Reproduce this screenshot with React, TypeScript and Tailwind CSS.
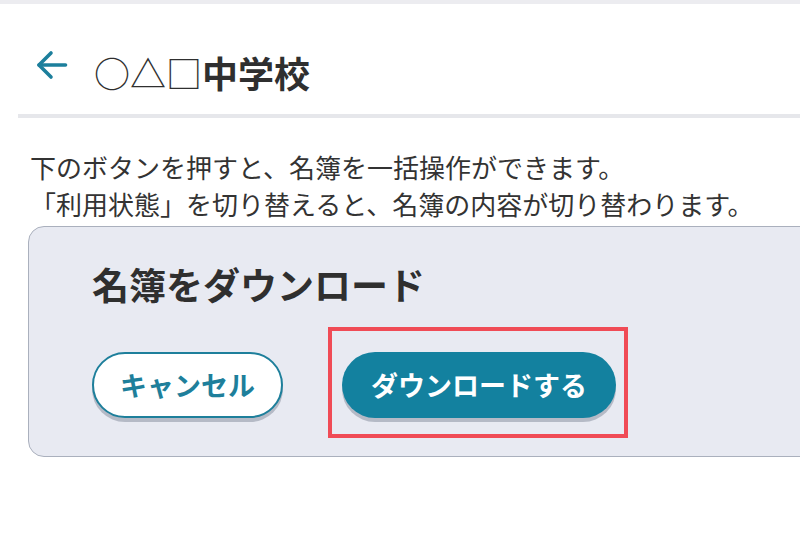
const font = { fontFamily: '"Noto Sans CJK JP", "Noto Sans", sans-serif' }

function BackArrow() {
  return (
    <svg width="32" height="30" viewBox="0 0 32 30" fill="none" stroke="#1c7f9c" strokeWidth="3.6" strokeLinecap="round" strokeLinejoin="round">
      <path d="M29.5 15H3" />
      <path d="M15 3L3 15l12 12" />
    </svg>
  )
}

export default function App() {
  return (
    <div className="w-[800px] h-[537px] overflow-hidden bg-white text-[#333333]" style={font}>
      <div className="h-[4px] bg-[#ececf0]" />

      <header className="flex items-start pl-[36px] pt-[43px] pb-[17px]">
        <span className="mt-[3px]">
          <BackArrow />
        </span>
        <h1 className="ml-[26px] text-[36px] leading-[50px] font-bold text-[#2f2f2f]">
          <span className="font-normal">○△□</span>中学校
        </h1>
      </header>

      <div className="ml-[18px] h-[4px] bg-[#e6e7eb]" />

      <div className="pl-[30px] pt-[30px] text-[26px] leading-[37px]">
        <p>下のボタンを押すと、名簿を一括操作ができます。</p>
        <p>「利用状態」を切り替えると、名簿の内容が切り替わります。</p>
      </div>

      <section className="ml-[28px] mt-[4px] w-[800px] rounded-[16px] border-[1.5px] border-[#aab0bd] bg-[#e8eaf2] pl-[63px] pt-[32px] pb-[38px]">
        <h2 className="text-[37px] leading-[50px] font-bold text-[#2f2f2f]">名簿をダウンロード</h2>

        <div className="mt-[43px] flex items-center gap-[59px]">
          <button className="h-[66px] w-[191px] rounded-full border-[2px] border-[#1e7f9b] bg-white text-[27px] font-bold text-[#1e7f9b] shadow-[0_4px_0_#b5bac6]">
            キャンセル
          </button>

          <span className="relative">
            <button className="h-[66px] w-[274px] rounded-full bg-[#13819f] text-[27px] font-bold text-white shadow-[0_4px_0_#b5bac6]">
              ダウンロードする
            </button>
            <span className="pointer-events-none absolute left-[-14px] top-[-25px] right-[-12px] bottom-[-20px] border-[4px] border-[#f04b56]" />
          </span>
        </div>
      </section>
    </div>
  )
}
